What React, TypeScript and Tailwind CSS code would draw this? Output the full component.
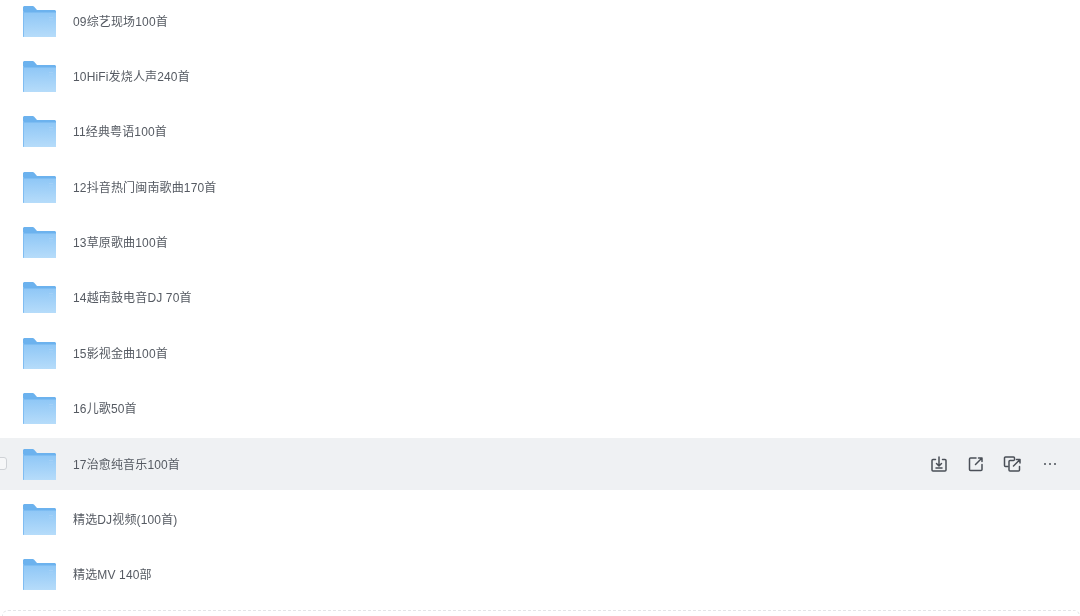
import React from "react";

const rows = [
  "09综艺现场100首",
  "10HiFi发烧人声240首",
  "11经典粤语100首",
  "12抖音热门闽南歌曲170首",
  "13草原歌曲100首",
  "14越南鼓电音DJ 70首",
  "15影视金曲100首",
  "16儿歌50首",
  "17治愈纯音乐100首",
  "精选DJ视频(100首)",
  "精选MV 140部",
];

const FolderIcon = ({ id }: { id: number }) => (
  <svg width="33" height="31" viewBox="0 0 33 31" className="shrink-0">
    <defs>
      <linearGradient id={`body${id}`} x1="0" y1="0" x2="0" y2="1">
        <stop offset="0" stopColor="#8fc7f6" />
        <stop offset="1" stopColor="#b6dcfa" />
      </linearGradient>
    </defs>
    <path d="M0 1.500C0 .7.7 0 1.500 0h8.200c.6 0 1.100.2 1.500.7L14 4h17.500c.8 0 1.500.7 1.500 1.500V8H0z" fill="#6cb2ee" />
    <path d="M0 6.500h33V31H1C.4 31 0 30.600 0 30z" fill={`url(#body${id})`} />
    <path d="M0 5h1v26C.4 31 0 30.600 0 30z" fill="#80bdf2" />
    <path d="M26 11.500h4M26 14h4" stroke="#a3d0f7" strokeWidth="1" />
  </svg>
);

const RowActions = () => (
  <div className="ml-auto flex items-center gap-[19px] pr-[23px] text-[#4a4f57]">
    <svg width="18" height="18" viewBox="0 0 18 18" fill="none" stroke="currentColor" strokeWidth="1.500" strokeLinecap="round" strokeLinejoin="round">
      <path d="M5.500 4.500H3a1 1 0 0 0-1 1V15a1 1 0 0 0 1 1h12a1 1 0 0 0 1-1V5.500a1 1 0 0 0-1-1h-2.500" />
      <path d="M9 2v8.500M6.500 8.500 9 11l2.500-2.500" />
      <path d="M6 13h6" />
    </svg>
    <svg width="18" height="18" viewBox="0 0 18 18" fill="none" stroke="currentColor" strokeWidth="1.500" strokeLinecap="round" strokeLinejoin="round">
      <path d="M9 3H3.500a1 1 0 0 0-1 1v10.500a1 1 0 0 0 1 1H14a1 1 0 0 0 1-1V9.500" />
      <path d="M8.500 9.500 15 3M11.500 3H15v3.500" />
    </svg>
    <svg width="19" height="18" viewBox="0 0 19 18" fill="none" stroke="currentColor" strokeWidth="1.500" strokeLinecap="round" strokeLinejoin="round" className="-ml-[1px]">
      <path d="M5 11.500H2.500a1 1 0 0 1-1-1V3a1 1 0 0 1 1-1h8a1 1 0 0 1 1 1v2" />
      <path d="M10.500 5.500H7a1 1 0 0 0-1 1V15a1 1 0 0 0 1 1h8.500a1 1 0 0 0 1-1v-3.500" />
      <path d="M10.500 11 17 4.500M13.500 4.500H17V8" />
    </svg>
    <svg width="14" height="18" viewBox="0 0 14 18" fill="currentColor" className="ml-[2px]">
      <circle cx="2" cy="9" r="1" />
      <circle cx="7" cy="9" r="1" />
      <circle cx="12" cy="9" r="1" />
    </svg>
  </div>
);

export default function App() {
  return (
    <div className="h-[616px] w-[1080px] overflow-hidden bg-white font-['Liberation_Sans','Noto_Sans_CJK_SC',sans-serif] text-xs tracking-[0.15px] text-[#555a62] blur-[0.3px]">
      <div className="-mt-[6.700px] flex flex-col">
        {rows.map((name, i) => {
          const active = i === 8;
          return (
            <div key={name} className="relative flex h-[55.400px] items-center">
              {active && <div className="absolute inset-x-0 top-[1.500px] h-[52px] bg-[#eff1f3]" />}
              {active && (
                <div className="absolute -left-[6px] top-[21px] h-[13px] w-[13px] rounded-[3px] border border-[#cfd2d6] bg-[#f6f7f8]" />
              )}
              <div className="relative flex w-full items-center pl-[23px]">
                <FolderIcon id={i} />
                <span className="ml-[17px] whitespace-nowrap pt-[1px] leading-none">{name}</span>
                {active && <RowActions />}
              </div>
            </div>
          );
        })}
      </div>
      <div className="ml-[2px] mt-[7px] h-[20px] rounded-t-[6px] border border-dashed border-[#e3e5e8]" />
    </div>
  );
}
